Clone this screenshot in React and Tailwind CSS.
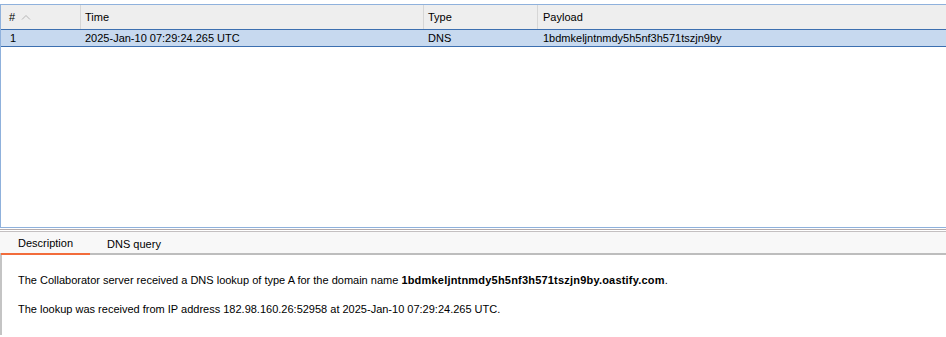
import React from "react";

export default function App() {
  const font = { fontFamily: '"Liberation Sans", Arial, sans-serif' };
  return (
    <div className="w-[946px] h-[337px] bg-white overflow-hidden text-[11px] text-black" style={font}>
      <div className="h-[4px] bg-white" />
      {/* Table frame */}
      <div className="h-[224px] border-t border-l border-b border-[#8fb1dc] flex flex-col">
        {/* header */}
        <div className="h-[24px] bg-[#eeeeee] flex items-center">
          <div className="w-[80px] h-full flex items-center pl-[8px] border-r border-[#d6d6d6]">
            <span>#</span>
            <svg className="ml-[6px]" width="10" height="6" viewBox="0 0 10 6">
              <path d="M1 5.5 L5 1.5 L9 5.5" fill="none" stroke="#b5b5b5" strokeWidth="1" />
            </svg>
          </div>
          <div className="w-[343px] h-full flex items-center pl-[4px] border-r border-[#d6d6d6]">Time</div>
          <div className="w-[114px] h-full flex items-center pl-[4px] border-r border-[#d6d6d6]">Type</div>
          <div className="flex-1 h-full flex items-center pl-[5px]">Payload</div>
        </div>
        {/* selected row */}
        <div className="h-[18px] bg-[#c7d9ef] border-y border-[#3c6fb0] flex items-center">
          <div className="w-[80px] pl-[9px]">1</div>
          <div className="w-[343px] pl-[4px]">2025-Jan-10 07:29:24.265 UTC</div>
          <div className="w-[114px] pl-[4px]">DNS</div>
          <div className="flex-1 pl-[5px]">1bdmkeljntnmdy5h5nf3h571tszjn9by</div>
        </div>
        <div className="flex-1" />
      </div>
      <div className="h-[1px] bg-white" />
      {/* tabs */}
      <div className="border-t border-[#b3abad] h-[2px] bg-white" />
      <div className="border-t border-[#c4c0c1] h-[24px] bg-[#f8f8f8] flex items-stretch border-b-2 border-b-[#bdbdbd]">
        <div className="w-[89px] ml-[1px] pt-[1px] flex items-center justify-center border-b-2 border-[#f26c3b] -mb-[2px]">Description</div>
        <div className="w-[88px] pt-[1px] flex items-center justify-center -mb-[2px]">DNS query</div>
      </div>
      {/* content */}
      <div className="border-l-2 border-[#c4c4c4] h-[80px] pl-[16px] pt-[19px]">
        <p className="leading-[13px]">
          The Collaborator server received a DNS lookup of type A for the domain name{" "}
          <b className="tracking-[0.2px]">1bdmkeljntnmdy5h5nf3h571tszjn9by.oastify.com</b>.
        </p>
        <p className="leading-[13px] mt-[16px]">
          The lookup was received from IP address 182.98.160.26:52958 at 2025-Jan-10 07:29:24.265 UTC.
        </p>
      </div>
    </div>
  );
}
